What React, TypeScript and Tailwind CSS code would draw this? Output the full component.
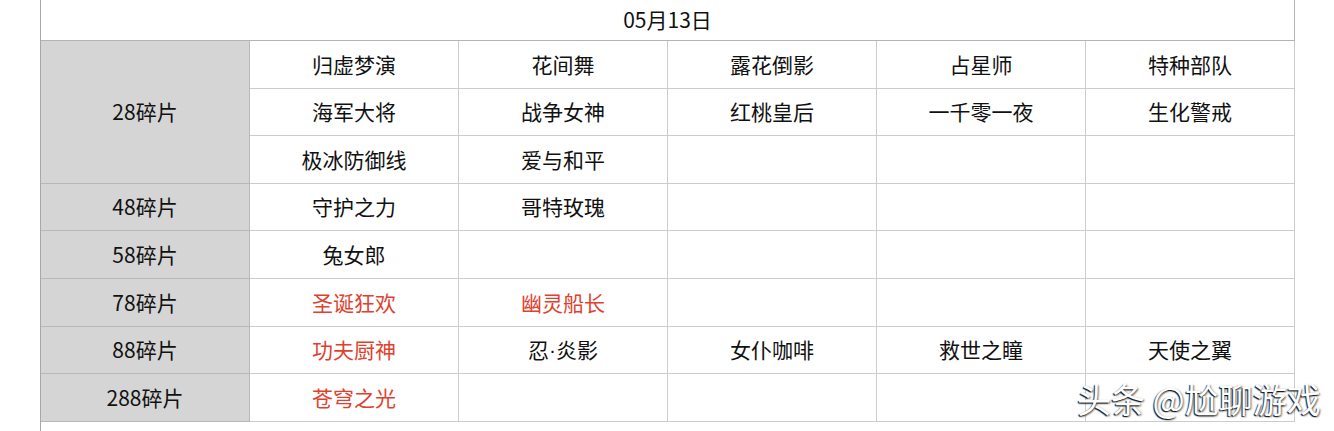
import { Fragment } from "react";

const rows: { label: string; span: number; cells: { text: string; red?: boolean }[][] }[] = [
  {
    label: "28碎片",
    span: 3,
    cells: [
      [{ text: "归虚梦演" }, { text: "花间舞" }, { text: "露花倒影" }, { text: "占星师" }, { text: "特种部队" }],
      [{ text: "海军大将" }, { text: "战争女神" }, { text: "红桃皇后" }, { text: "一千零一夜" }, { text: "生化警戒" }],
      [{ text: "极冰防御线" }, { text: "爱与和平" }, { text: "" }, { text: "" }, { text: "" }],
    ],
  },
  { label: "48碎片", span: 1, cells: [[{ text: "守护之力" }, { text: "哥特玫瑰" }, { text: "" }, { text: "" }, { text: "" }]] },
  { label: "58碎片", span: 1, cells: [[{ text: "兔女郎" }, { text: "" }, { text: "" }, { text: "" }, { text: "" }]] },
  {
    label: "78碎片",
    span: 1,
    cells: [[{ text: "圣诞狂欢", red: true }, { text: "幽灵船长", red: true }, { text: "" }, { text: "" }, { text: "" }]],
  },
  {
    label: "88碎片",
    span: 1,
    cells: [[{ text: "功夫厨神", red: true }, { text: "忍·炎影" }, { text: "女仆咖啡" }, { text: "救世之瞳" }, { text: "天使之翼" }]],
  },
  {
    label: "288碎片",
    span: 1,
    cells: [[{ text: "苍穹之光", red: true }, { text: "" }, { text: "" }, { text: "" }, { text: "" }]],
  },
];

// the middle dot should be narrow, as in a latin font
function CellText({ text }: { text: string }) {
  if (!text.includes("·")) return <>{text}</>;
  const [a, b] = text.split("·");
  return (
    <>
      {a}
      <span style={{ fontFamily: '"Liberation Sans", sans-serif' }}>·</span>
      {b}
    </>
  );
}

export default function App() {
  return (
    <div
      className="relative w-[1334px] h-[431px] overflow-hidden bg-white text-[#111] text-[21px]"
      style={{ fontFamily: '"Noto Sans CJK SC", "Noto Sans", sans-serif' }}
    >
      <div className="ml-[40px] w-[1255px] h-[431px] border-l border-[#a8a8a8]">
        <div className="grid grid-cols-[209px_209px_209px_209px_209px_209px] grid-rows-[41px_repeat(8,47.6px)]">
          <div className="col-span-6 flex items-center justify-center border-b border-r border-[#b4b4b4]">
            05月13日
          </div>
          {rows.map((r) => (
            <Fragment key={r.label}>
              <div
                className={`${r.span === 3 ? "row-span-3" : ""} flex items-center justify-center bg-[#d5d5d5] border-b border-r border-[#b8b8b8]`}
              >
                {r.label}
              </div>
              {r.cells.flat().map((c, i) => (
                <div
                  key={i}
                  className={`flex items-center justify-center border-b border-r border-[#cccccc] ${c.red ? "text-[#e0412e]" : ""}`}
                >
                  <CellText text={c.text} />
                </div>
              ))}
            </Fragment>
          ))}
        </div>
      </div>
      <div className="absolute left-[1077px] top-[377px] text-[34px] leading-[44px] text-white [text-shadow:-1px_1px_1px_rgba(0,0,0,0.9),1px_1px_2px_rgba(0,0,0,0.6)] whitespace-nowrap">
        头条 @尬聊游戏
      </div>
    </div>
  );
}
